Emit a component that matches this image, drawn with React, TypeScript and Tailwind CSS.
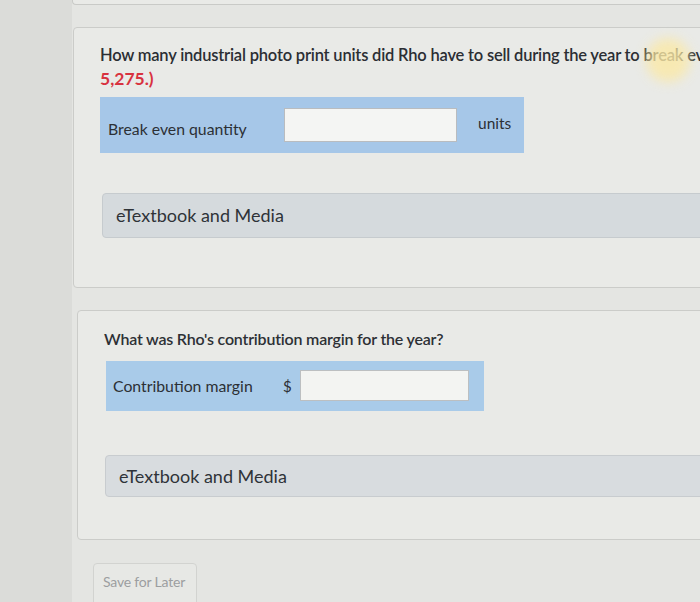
import React from "react";

export default function App() {
  return (
    <div
      className="w-[700px] h-[602px] overflow-hidden flex bg-[#e4e5e2] text-[#2f3236]"
      style={{ fontFamily: "Lato, 'Open Sans', sans-serif" }}
    >
      <div className="w-[72px] shrink-0 bg-[#dbdcd9]" />
      <div className="relative flex-1 flex flex-col min-w-0">
        {/* remnant of previous card */}
        <div className="h-[5px] shrink-0 w-[700px] border-b border-l border-[#c9cac7] bg-[#e9eae7] rounded-bl-sm" />

        {/* Card 1 */}
        <div className="mt-[22px] ml-[1px] w-[700px] h-[261px] shrink-0 border border-[#cbccc9] bg-[#e9eae7] rounded-sm pl-[26px] pt-[15px]">
          <div className="whitespace-nowrap text-[16.5px] font-semibold leading-[25px] tracking-[-0.2px] text-[#2b2e33]">
            How many industrial photo print units did Rho have to sell during the year to break even? (Round answer to 0 decimal places, e.g.
          </div>
          <div className="text-[17.5px] font-bold leading-[22px] text-[#d8323f]">5,275.)</div>
          <div className="mt-[7px] w-[424px] h-[56px] bg-[#a6c7e8] flex items-center pl-[8px]">
            <span className="w-[176px] text-[15.8px] pt-[8px] text-[#2c3035]">Break even quantity</span>
            <div className="w-[173px] h-[34px] bg-[#f4f5f3] border border-[#b9bcbf]" />
            <span className="ml-[21px] text-[15.5px] -mt-[2px] text-[#2c3035]">units</span>
          </div>
          <div className="mt-[40px] ml-[2px] h-[45px] bg-[#d5dadd] border border-[#c6cbce] rounded-sm flex items-center pl-[13px]">
            <span className="text-[18px] text-[#2f3338]">eTextbook and Media</span>
          </div>
        </div>

        {/* Card 2 */}
        <div className="mt-[22px] ml-[5px] w-[700px] h-[230px] shrink-0 border border-[#cbccc9] bg-[#e9eae7] rounded-sm pl-[26px] pt-[17px]">
          <div className="text-[16px] leading-[22px] font-semibold tracking-[-0.2px] text-[#2d3035]">
            What was Rho's contribution margin for the year?
          </div>
          <div className="mt-[11px] ml-[2px] w-[378px] h-[50px] bg-[#a9cbe9] flex items-center pl-[7px]">
            <span className="w-[170px] text-[15.8px] text-[#2c3035]">Contribution margin</span>
            <span className="w-[17px] text-[15px] text-[#2c3035]">$</span>
            <div className="w-[169px] h-[31px] bg-[#f3f4f2] border border-[#bcbfc1] -mt-[2px]" />
          </div>
          <div className="mt-[44px] ml-[1px] h-[42px] bg-[#d8dcdf] border border-[#c8cccf] rounded-sm flex items-center pl-[13px]">
            <span className="text-[18px] text-[#2f3338]">eTextbook and Media</span>
          </div>
        </div>

        {/* Save for later */}
        <div className="mt-[23px] ml-[21px] w-[104px] h-[44px] shrink-0 border border-[#d2d3d0] rounded-sm flex items-start pt-[8px] pl-[9px] bg-[#e7e8e5]">
          <span className="text-[14px] leading-[20px] text-[#9c9ea0] tracking-[-0.2px]">Save for Later</span>
        </div>

        {/* glare */}
        <div className="absolute left-[574px] top-[38px] w-[44px] h-[44px] rounded-full bg-[#fbe9a6] opacity-80 blur-[6px]" />
      </div>
    </div>
  );
}
